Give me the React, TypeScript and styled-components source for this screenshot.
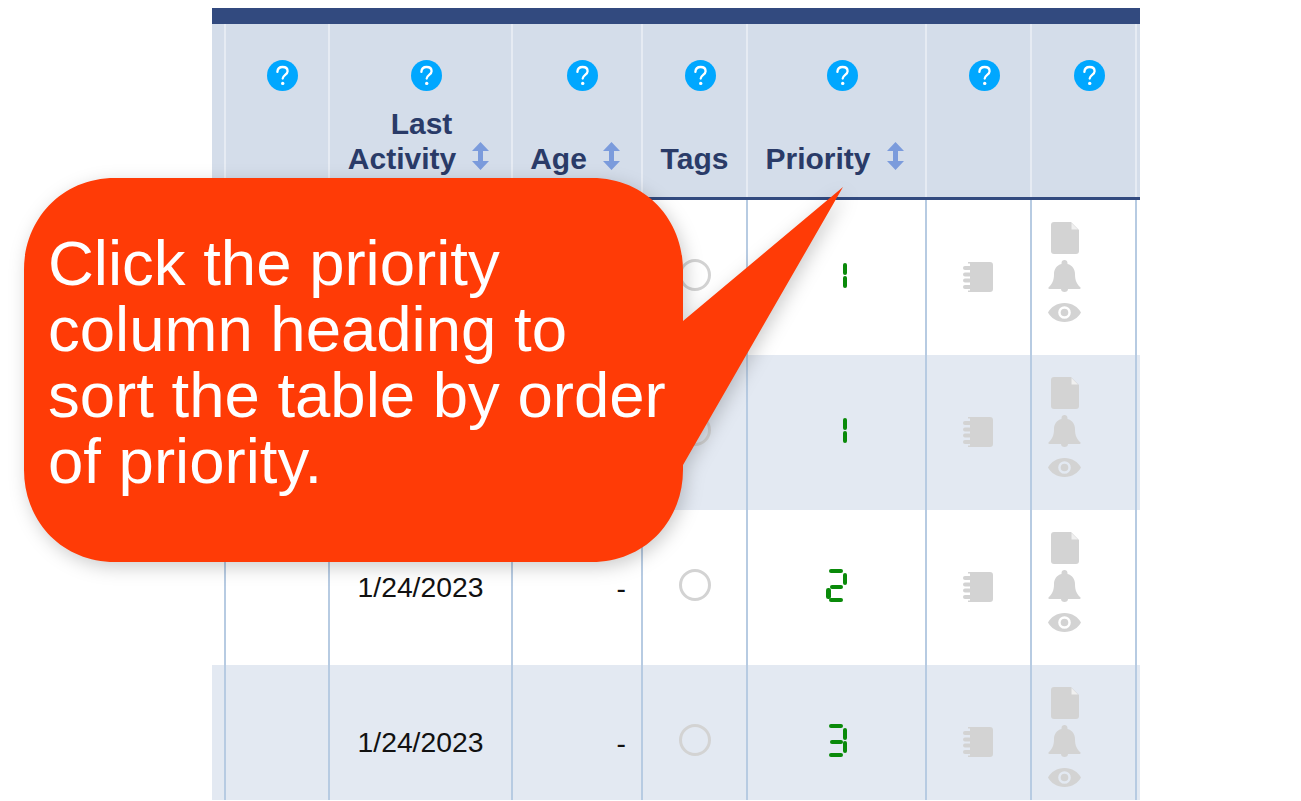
import React from "react";
import styled, { createGlobalStyle } from "styled-components";

const Global = createGlobalStyle`
  html, body { margin: 0; padding: 0; background: #fff; height: 100%; overflow: hidden; }
  body { font-family: "Liberation Sans", Arial, sans-serif; }
  #root { height: 100%; }
`;

const COLS = "14px 104px 183px 130px 105px 179px 105px 105px 3px";

const Page = styled.div`
  position: relative;
  width: 1301px;
  height: 801px;
  overflow: hidden;
  padding: 8px 0 0 212px;
  box-sizing: border-box;
`;
const Table = styled.div`
  width: 928px;
  height: 792px;
  overflow: hidden;
`;
const TopBar = styled.div`
  height: 16px;
  background: #324a7f;
`;
const HeaderRow = styled.div`
  display: grid;
  grid-template-columns: ${COLS};
  height: 176px;
  background: #d4ddea;
  border-bottom: 3px solid #324a7f;
  box-sizing: border-box;
`;
const HeadCell = styled.div`
  display: flex;
  flex-direction: column;
  align-items: center;
  border-right: 2px solid #e6ebf3;
  box-sizing: border-box;
  padding-top: 36px;
  color: #2a3b68;
  font-weight: 700;
  font-size: 30px;
  line-height: 35px;
  &:last-child { border-right: 0; }
`;
const HelpIcon = styled.svg`
  width: 31px;
  height: 31px;
  flex: none;
  margin-left: 11px;
`;
const HeadLabel = styled.div`
  margin-top: 15px;
  height: 70px;
  display: flex;
  flex-direction: column;
  justify-content: flex-end;
  text-align: center;
  white-space: nowrap;
`;
const LabelLine = styled.div<{ $sorted: boolean; $lead: boolean }>`
  margin-right: ${(p) => (p.$sorted ? 4 : 0)}px;
  padding-left: ${(p) => (p.$lead ? 6 : 0)}px;
`;
const SortIcon = styled.svg`
  width: 17px;
  height: 28px;
  fill: #7b9bdc;
  margin-left: 16px;
  vertical-align: -1px;
`;
const Row = styled.div<{ $shade: boolean }>`
  display: grid;
  grid-template-columns: ${COLS};
  height: 155px;
  background: ${(p) => (p.$shade ? "#e3e9f2" : "#fff")};
`;
const Cell = styled.div`
  display: flex;
  align-items: center;
  justify-content: center;
  border-right: 2px solid #b7cbe2;
  box-sizing: border-box;
  font-size: 28.3px;
  color: #111;
  &:last-child { border-right: 0; }
`;
const DashCell = styled(Cell)`
  justify-content: flex-end;
  padding: 2px 15px 0 0;
`;
const ActionCell = styled(Cell)`
  flex-direction: column;
  align-items: flex-start;
  justify-content: flex-start;
  padding: 22px 0 0 16px;
  color: #d3d3d3;
`;
const Ring = styled.div`
  width: 32px;
  height: 32px;
  border: 3.5px solid #d3d3d3;
  border-radius: 50%;
  box-sizing: border-box;
  margin-bottom: 5px;
`;
const NoteIcon = styled.svg`
  width: 30px;
  height: 30px;
  fill: #d3d3d3;
  margin: 0 1px 2px 0;
`;
const FileIcon = styled.svg`
  width: 28px;
  height: 32px;
  display: block;
  margin-left: 3px;
`;
const BellIcon = styled.svg`
  width: 33px;
  height: 32px;
  display: block;
  margin-top: 6px;
`;
const EyeIcon = styled.svg`
  width: 33px;
  height: 19px;
  display: block;
  margin-top: 11px;
`;

/* seven-segment priority read-out, built from CSS bars over its transparent digit */
const Seven = styled.div`
  position: relative;
  width: 21px;
  height: 33px;
  margin-bottom: 5px;
  color: transparent;
  font-size: 28px;
  line-height: 33px;
  text-align: center;
`;
const Seg = styled.span<{ $x: number; $y: number; $w: number; $h: number }>`
  position: absolute;
  left: ${(p) => p.$x}px;
  top: ${(p) => p.$y}px;
  width: ${(p) => p.$w}px;
  height: ${(p) => p.$h}px;
  background: #0a8a0a;
  border-radius: 2.2px;
`;

const SEGS: Record<string, [number, number, number, number]> = {
  a: [3, 0, 14, 4],
  b: [16.5, 4, 4.5, 12],
  c: [16.5, 17, 4.5, 12],
  d: [3, 29, 14, 4],
  e: [0, 19, 4.5, 11],
  g: [3.5, 16, 13, 4],
};
const DIGITS: Record<number, string> = { 1: "bc", 2: "abged", 3: "abgcd" };

const Digit: React.FC<{ n: number }> = ({ n }) => (
  <Seven>
    {n}
    {DIGITS[n].split("").map((s) => {
      const [x, y, w, h] = SEGS[s];
      return <Seg key={s} $x={x} $y={y} $w={w} $h={h} />;
    })}
  </Seven>
);

const Help = () => (
  <HelpIcon viewBox="0 0 31 31">
    <circle cx="15.5" cy="15.5" r="15.5" fill="#00a7ff" />
    <path
      d="M10.4 11.8c.2-3 2.4-4.8 5.2-4.8 3 0 5 1.7 5 4.2 0 3.5-4.9 3.7-4.9 7.4"
      fill="none"
      stroke="#fff"
      strokeWidth="2.3"
      strokeLinecap="round"
    />
    <circle cx="15.7" cy="23.4" r="1.7" fill="#fff" />
  </HelpIcon>
);

const Sort = () => (
  <SortIcon viewBox="0 0 17 28">
    <path d="M8.5 0 17 9h-6v10h6L8.5 28 0 19h6V9H0z" />
  </SortIcon>
);

const Callout = styled.div`
  position: absolute;
  left: 24px;
  top: 178px;
  width: 820px;
  height: 384px;
`;
const CalloutShape = styled.svg`
  position: absolute;
  inset: 0;
  width: 820px;
  height: 384px;
  overflow: visible;
  filter: drop-shadow(3px 5px 9px rgba(0, 0, 0, 0.2));
`;
const CalloutText = styled.div`
  position: relative;
  padding: 52px 0 0 24px;
  width: 628px;
  font-size: 63.5px;
  line-height: 66px;
  color: #fff;
`;

const heads = [
  { help: false },
  { help: true },
  { help: true, lines: ["Last", "Activity"], sort: true },
  { help: true, lines: ["Age"], sort: true },
  { help: true, lines: ["Tags"] },
  { help: true, lines: ["Priority"], sort: true },
  { help: true },
  { help: true },
  { help: false },
];

const rows = [
  { prio: 1 },
  { prio: 1 },
  { prio: 2, date: "1/24/2023", age: "-" },
  { prio: 3, date: "1/24/2023", age: "-" },
];

export default function App() {
  return (
    <Page>
      <Global />
      <Table>
        <TopBar />
        <HeaderRow>
          {heads.map((h, i) => (
            <HeadCell key={i}>
              {h.help && <Help />}
              {h.lines && (
                <HeadLabel>
                  {h.lines.map((l, j) => {
                    const last = j === h.lines!.length - 1;
                    return (
                      <LabelLine key={l} $sorted={!!h.sort} $lead={!last}>
                        {l}
                        {h.sort && last && <Sort />}
                      </LabelLine>
                    );
                  })}
                </HeadLabel>
              )}
            </HeadCell>
          ))}
        </HeaderRow>
        {rows.map((r, i) => (
          <Row key={i} $shade={i % 2 === 1}>
            <Cell />
            <Cell />
            <Cell>{r.date}</Cell>
            <DashCell>{r.age}</DashCell>
            <Cell><Ring /></Cell>
            <Cell><Digit n={r.prio} /></Cell>
            <Cell>
              <NoteIcon viewBox="0 0 30 30">
                <path d="M5 0h22a3 3 0 0 1 3 3v24a3 3 0 0 1-3 3H5v-1.5h2V1.5H5z" />
                <rect x="0" y="4" width="8.5" height="4" rx="2" />
                <rect x="0" y="10.5" width="8.5" height="4" rx="2" />
                <rect x="0" y="16.5" width="8.5" height="4" rx="2" />
                <rect x="0" y="23" width="8.5" height="4" rx="2" />
              </NoteIcon>
            </Cell>
            <ActionCell>
              <FileIcon viewBox="0 0 28 32">
                <path fill="currentColor" d="M3 0h17l8 8v21a3 3 0 0 1-3 3H3a3 3 0 0 1-3-3V3a3 3 0 0 1 3-3z" />
                <path fill="#fff" fillOpacity="0.65" d="M20.5 1 27 7.5h-6.5z" />
              </FileIcon>
              <BellIcon viewBox="0 0 33 32">
                <path fill="currentColor" d="M16.5 0c1.7 0 3 1.3 3 3v1c5 1.2 7.5 5.5 7.5 10 0 7 2 10 5.5 13.5.5.7 0 1.5-1 1.5H1.5c-1 0-1.5-.8-1-1.5C4 24 6 21 6 14c0-4.5 2.5-8.8 7.5-10V3c0-1.7 1.3-3 3-3z" />
                <path fill="currentColor" d="M13 29h7c0 2-1.5 3-3.5 3S13 31 13 29z" />
              </BellIcon>
              <EyeIcon viewBox="0 0 33 19">
                <path
                  fill="currentColor"
                  fillRule="evenodd"
                  d="M16.5 0C24 0 30 4 33 9.5 30 15 24 19 16.5 19 9 19 3 15 0 9.5 3 4 9 0 16.5 0zm0 3.2a6.3 6.3 0 1 0 0 12.6 6.3 6.3 0 0 0 0-12.6z"
                />
                <circle cx="16.5" cy="9.5" r="3.8" fill="currentColor" />
              </EyeIcon>
            </ActionCell>
            <Cell />
          </Row>
        ))}
      </Table>
      <Callout>
        <CalloutShape viewBox="0 0 820 384">
          <path
            fill="#ff3b06"
            d="M91 0H568C622 0 659 42 659 92V143L819 9 659 287V292C659 342 622 384 568 384H91C37 384 0 342 0 292V92C0 42 37 0 91 0Z"
          />
        </CalloutShape>
        <CalloutText>Click the priority column heading to sort the table by order of priority.</CalloutText>
      </Callout>
    </Page>
  );
}
